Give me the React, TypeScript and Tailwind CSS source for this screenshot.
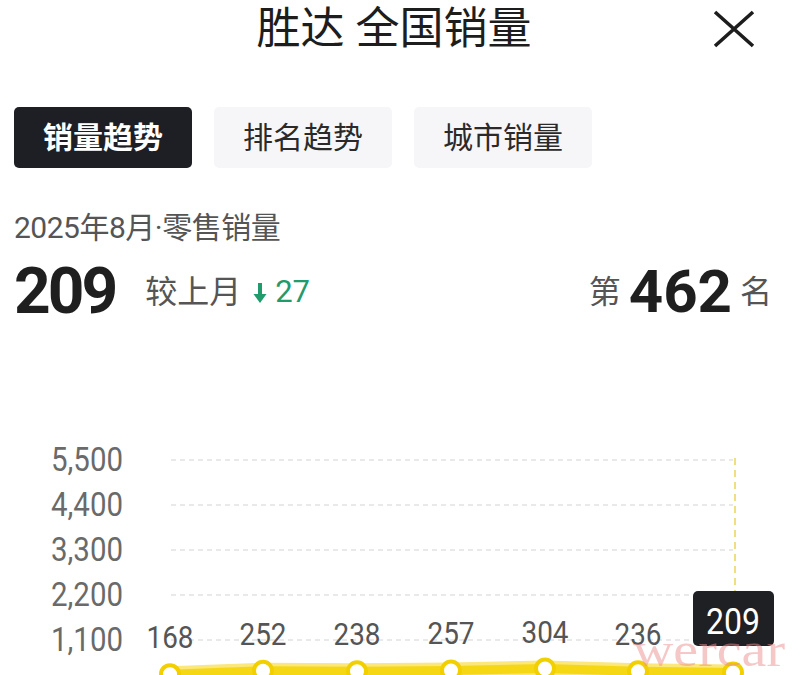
import React from 'react';

const points = [
  { x: 170, v: 168 },
  { x: 263, v: 252 },
  { x: 357, v: 238 },
  { x: 451, v: 257 },
  { x: 545, v: 304 },
  { x: 638, v: 236 },
  { x: 733, v: 209 },
];

const yTicks = [
  { label: '5,500', y: 458 },
  { label: '4,400', y: 503 },
  { label: '3,300', y: 548 },
  { label: '2,200', y: 593 },
  { label: '1,100', y: 638 },
];

const toY = (v: number) => 679 - (v * 45) / 1100;

const Tab = ({ label, active }: { label: string; active?: boolean }) => (
  <div
    className={
      active
        ? 'w-[178px] h-[61px] rounded-[5px] bg-[#1e1f24] text-white font-bold flex items-center justify-center text-[30px]'
        : 'w-[178px] h-[61px] rounded-[5px] bg-[#f6f6f8] text-[#2a2a2a] flex items-center justify-center text-[30px]'
    }
  >
    {label}
  </div>
);

const SalesChart = () => {
  const line = points.map(p => `${p.x},${toY(p.v)}`).join(' ');
  return (
    <svg width="800" height="350" viewBox="0 325 800 350" className="block">
      {yTicks.map(t => (
        <g key={t.label}>
          <text
            x={123}
            y={t.y + 11}
            textAnchor="end"
            fontSize={33}
            fill="#6a6a6a"
            textLength={72}
            lengthAdjust="spacingAndGlyphs"
            fontFamily="Roboto, sans-serif"
          >
            {t.label}
          </text>
          <line x1={171} x2={733} y1={t.y} y2={t.y} stroke="#e2e2e2" strokeWidth={1.5} strokeDasharray="5 4" />
        </g>
      ))}
      <line x1={735} x2={735} y1={456} y2={590} stroke="#ecd55a" strokeWidth={1.5} strokeDasharray="7 5" />

      <polyline points={line} fill="none" stroke="#fbe77a" strokeWidth={16} strokeLinejoin="round" strokeLinecap="round" />
      <polyline points={line} fill="none" stroke="#f5d716" strokeWidth={9} strokeLinejoin="round" strokeLinecap="round" />

      {points.slice(0, 6).map(p => (
        <text
          key={p.x}
          x={p.x}
          y={toY(p.v) - 26}
          textAnchor="middle"
          fontSize={31}
          fill="#555"
          textLength={47}
          lengthAdjust="spacingAndGlyphs"
          fontFamily="Roboto, sans-serif"
        >
          {p.v}
        </text>
      ))}

      {points.map(p => (
        <circle key={p.x} cx={p.x} cy={toY(p.v)} r={9} fill="#fff" stroke="#f2d000" strokeWidth={4} />
      ))}

      <rect x={693} y={589} width={81} height={55} rx={5} fill="#1f2024" />
      <text
        x={733}
        y={632}
        textAnchor="middle"
        fontSize={37}
        fill="#fff"
        textLength={54}
        lengthAdjust="spacingAndGlyphs"
        fontFamily="Roboto, sans-serif"
      >
        209
      </text>

      <text
        x={633}
        y={664}
        fontSize={48}
        fill="#ee9090"
        opacity={0.5}
        textLength={152}
        lengthAdjust="spacingAndGlyphs"
        fontFamily="'Liberation Serif', serif"
      >
        wercar
      </text>
    </svg>
  );
};

export default function App() {
  return (
    <div className="w-[800px] h-[675px] overflow-hidden bg-white text-[#222] font-['Roboto','Noto_Sans_CJK_SC',sans-serif]">
      <header className="grid grid-cols-[1fr_auto_1fr] items-center h-[58px]">
        <div />
        <h1 className="text-[44px] leading-[58px] font-normal text-[#1d1d1d] mr-[12px]">胜达 全国销量</h1>
        <div className="flex justify-end pr-[44px]">
          <svg width="44" height="40" viewBox="0 0 44 40">
            <path d="M3 3 L41 37 M41 3 L3 37" stroke="#1d1d1d" strokeWidth={3.6} fill="none" />
          </svg>
        </div>
      </header>

      <div className="flex gap-[22px] px-[14px] mt-[49px]">
        <Tab label="销量趋势" active />
        <Tab label="排名趋势" />
        <Tab label="城市销量" />
      </div>

      <p className="px-[14px] mt-[40px] text-[30px] leading-[40px] tracking-[-0.5px] text-[#555]">2025年8月·零售销量</p>

      <div className="flex items-center justify-between px-[14px] pr-[28px] mt-[9px] h-[70px]">
        <div className="flex items-center">
          <span className="text-[64px] leading-none font-bold tracking-[-3px] text-[#1f1f1f]">209</span>
          <span className="ml-[30px] text-[32px] text-[#555]">较上月</span>
          <span className="ml-[12px] flex items-center text-[31px] text-[#1f9b6c]">
            <svg width="14" height="22" viewBox="0 0 14 22" className="mr-[8px] mt-[2px]">
              <path d="M7 1 V15" stroke="#1f9b6c" strokeWidth={4} />
              <path d="M0.5 12 L7 21 L13.5 12 Z" fill="#1f9b6c" />
            </svg>
            27
          </span>
        </div>
        <div className="flex items-center">
          <span className="text-[32px] text-[#555]">第</span>
          <span className="mx-[8px] text-[60px] leading-none font-bold text-[#1f1f1f]">462</span>
          <span className="text-[32px] text-[#555]">名</span>
        </div>
      </div>

      <SalesChart />
    </div>
  );
}
